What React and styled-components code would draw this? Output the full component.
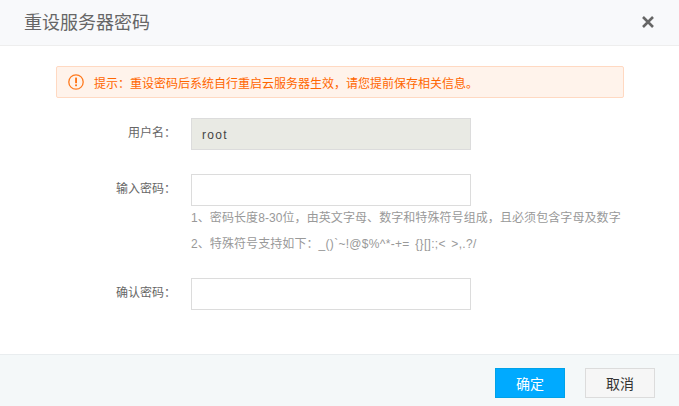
import React from "react";
import styled, { createGlobalStyle } from "styled-components";

const GlobalStyle = createGlobalStyle`
  html, body {
    margin: 0;
    padding: 0;
    background: #fff;
  }
  body {
    font-family: "Liberation Sans", "Noto Sans CJK SC", sans-serif;
  }
`;

const Dialog = styled.div`
  width: 679px;
  height: 406px;
  display: flex;
  flex-direction: column;
  overflow: hidden;
`;

const Header = styled.div`
  height: 46px;
  box-sizing: border-box;
  padding: 0 24px 3px 24px;
  display: flex;
  align-items: center;
  justify-content: space-between;
  background: #f8f9fb;
  border-bottom: 1px solid #eeeeee;
`;

const Title = styled.div`
  font-size: 18px;
  color: #666;
`;

const CloseButton = styled.button`
  width: 14px;
  height: 14px;
  margin-top: 2px;
  padding: 0;
  border: 0;
  background: none;
  display: flex;
`;

const Body = styled.div`
  flex: 1;
  padding: 20px 55px 0 56px;
`;

const Alert = styled.div`
  height: 32px;
  box-sizing: border-box;
  display: flex;
  align-items: center;
  gap: 10px;
  padding-left: 11px;
  background: #fff3eb;
  border: 1px solid #ffd9c2;
  border-radius: 2px;
  color: #ff6600;
  font-size: 12px;
`;

const Row = styled.div`
  display: flex;
  align-items: center;
  margin-top: ${(p) => p.$top}px;
`;

const Label = styled.div`
  width: 120px;
  margin-right: 15px;
  padding-bottom: 5px;
  text-align: right;
  font-size: 12px;
  color: #666;
`;

const Field = styled.div`
  width: 280px;
  height: 32px;
  box-sizing: border-box;
  display: flex;
  align-items: center;
  padding: 1px 0 0 10px;
  border: 1px solid #dcdcdc;
  background: ${(p) => (p.$disabled ? "#e9eae4" : "#fff")};
  font-size: 12px;
  letter-spacing: 1.3px;
  color: #444;
`;

const Hints = styled.div`
  margin: -1px 0 0 135px;
  font-size: 12px;
  line-height: 26px;
  letter-spacing: 0.08px;
  color: #999;
  white-space: nowrap;
`;

const Symbols = styled.span`
  letter-spacing: 0.3px;
  word-spacing: 2px;
`;

const Footer = styled.div`
  height: 52px;
  box-sizing: border-box;
  display: flex;
  justify-content: flex-end;
  gap: 20px;
  padding: 13px 24px 0 0;
  background: #f4f8f9;
  border-top: 1px solid #e9edef;
`;

const Button = styled.button`
  width: 70px;
  height: 30px;
  padding: 0;
  box-sizing: border-box;
  font-family: inherit;
  font-size: 14px;
  border: 1px solid ${(p) => (p.$primary ? "#00a2e8" : "#dcdcdc")};
  background: ${(p) => (p.$primary ? "#00aaff" : "#f6f6f6")};
  color: ${(p) => (p.$primary ? "#fff" : "#333")};
`;

function WarnIcon() {
  return (
    <svg width="16" height="16" viewBox="0 0 16 16" fill="none">
      <circle cx="8" cy="8" r="7.2" stroke="#ff7a1f" strokeWidth="1.3" />
      <rect x="7.2" y="3.6" width="1.7" height="5.6" fill="#ff6600" />
      <rect x="7.2" y="10.4" width="1.7" height="1.8" fill="#ff6600" />
    </svg>
  );
}

function CloseIcon() {
  return (
    <svg width="14" height="14" viewBox="0 0 14 14" fill="none">
      <path d="M2 2 L12 12 M12 2 L2 12" stroke="#666" strokeWidth="2.6" />
    </svg>
  );
}

export default function App() {
  return (
    <Dialog>
      <GlobalStyle />
      <Header>
        <Title>重设服务器密码</Title>
        <CloseButton>
          <CloseIcon />
        </CloseButton>
      </Header>
      <Body>
        <Alert>
          <WarnIcon />
          <span>提示：重设密码后系统自行重启云服务器生效，请您提前保存相关信息。</span>
        </Alert>
        <Row $top={20}>
          <Label>用户名：</Label>
          <Field $disabled>root</Field>
        </Row>
        <Row $top={24}>
          <Label>输入密码：</Label>
          <Field />
        </Row>
        <Hints>
          <div>1、密码长度8-30位，由英文字母、数字和特殊符号组成，且必须包含字母及数字</div>
          <div>2、特殊符号支持如下：<Symbols>_()`~!@$%^*-+= {"{}"}[]:;&lt; &gt;,.?/</Symbols></div>
        </Hints>
        <Row $top={21}>
          <Label>确认密码：</Label>
          <Field />
        </Row>
      </Body>
      <Footer>
        <Button $primary>确定</Button>
        <Button>取消</Button>
      </Footer>
    </Dialog>
  );
}
